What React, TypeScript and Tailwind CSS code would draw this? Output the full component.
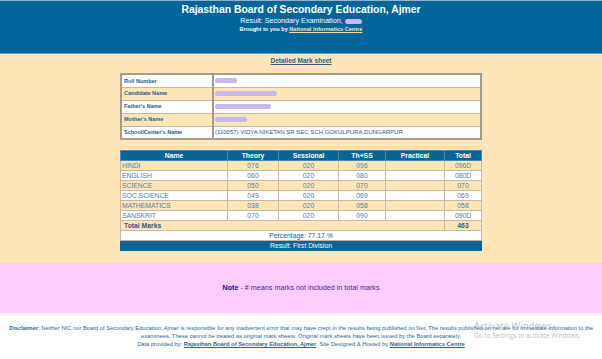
const font = { fontFamily: '"Liberation Sans Narrow", "Liberation Sans", Arial, sans-serif' }

function Blur({ w }: { w: number }) {
  return (
    <span
      className="inline-block h-[5px] rounded-full bg-[#c8b6ee] align-middle blur-[0.6px]"
      style={{ width: w }}
    />
  )
}

const info = [
  { label: 'Roll Number', blur: 22 },
  { label: 'Candidate Name', blur: 62 },
  { label: "Father's Name", blur: 56 },
  { label: "Mother's Name", blur: 32 },
  { label: "School/Center's Name", text: '(110057) VIDYA NIKETAN SR SEC SCH,GOKULPURA,DUNGARPUR' },
]

const marks = [
  ['HINDI', '076', '020', '096', '', '096D'],
  ['ENGLISH', '060', '020', '080', '', '080D'],
  ['SCIENCE', '050', '020', '070', '', '070'],
  ['SOC.SCIENCE', '049', '020', '069', '', '069'],
  ['MATHEMATICS', '038', '020', '058', '', '058'],
  ['SANSKRIT', '070', '020', '090', '', '090D'],
]

export default function App() {
  return (
    <div className="relative h-[359px] w-[602px] overflow-hidden bg-white" style={font}>
      {/* header */}
      <div className="h-[54px] border-t border-[#8fb5cc] border-b border-b-[#5a9fc4] bg-[#006699] pt-[2px] text-center text-white">
        <div className="text-[10.4px] font-bold leading-[13px]">Rajasthan Board of Secondary Education, Ajmer</div>
        <div className="text-[7.2px] leading-[9px]">
          Result: Secondary Examination, <Blur w={17} />
        </div>
        <div className="text-[5.6px] font-bold leading-[9px]">
          Brought to you by <span className="text-[#ffe4b5] underline">National Informatics Centre</span>
        </div>
      </div>

      {/* mark sheet */}
      <div className="h-[209px] bg-[#ffe6b9] pt-[1px]">
        <div className="text-center text-[6.5px] font-bold leading-[12px] text-[#2a5f8f] underline">Detailed Mark sheet</div>

        <table className="mx-auto mt-[6px] w-[362px] border-collapse border-2 border-[#a59a89] text-[5.5px] text-[#1d5a92]">
          <tbody>
            {info.map((r, i) => (
              <tr key={r.label} className={`h-[13px] border-b border-[#c4b8a4] ${i % 2 ? 'bg-[#ffe6b9]' : 'bg-white'}`}>
                <td className="w-[92px] border-r-2 border-[#a59a89] pl-[2px] font-bold">{r.label}</td>
                <td className="pl-[1px] text-[6px]">{r.text ?? <Blur w={r.blur!} />}</td>
              </tr>
            ))}
          </tbody>
        </table>

        <table className="mx-auto mt-[10px] w-[362px] border-collapse border border-[#c9b99c] text-[6.8px] leading-[8px] text-[#4b7bab]">
          <thead>
            <tr className="h-[10px] bg-[#006699] text-white">
              <th className="w-[107px] border border-[#4a88ad] font-bold">Name</th>
              <th className="w-[51px] border border-[#4a88ad] font-bold">Theory</th>
              <th className="w-[60px] border border-[#4a88ad] font-bold">Sessional</th>
              <th className="w-[47px] border border-[#4a88ad] font-bold">Th+SS</th>
              <th className="w-[59px] border border-[#4a88ad] font-bold">Practical</th>
              <th className="border border-[#4a88ad] font-bold">Total</th>
            </tr>
          </thead>
          <tbody>
            {marks.map((m, i) => (
              <tr key={m[0]} className={`h-[10px] ${i % 2 ? 'bg-white' : 'bg-[#ffe6b9]'}`}>
                {m.map((c, j) => (
                  <td key={j} className={`border border-[#c4b8a4] ${j === 0 ? 'pl-[1px] text-left' : 'text-center'}`}>
                    {c}
                  </td>
                ))}
              </tr>
            ))}
            <tr className="h-[10px] bg-[#ffe6b9] font-bold text-[#1d5a92]">
              <td colSpan={5} className="border border-[#c4b8a4] pl-[3px]">Total Marks</td>
              <td className="border border-[#c4b8a4] text-center">463</td>
            </tr>
            <tr className="h-[10px] bg-white text-[#1d5a92]">
              <td colSpan={6} className="border border-[#c4b8a4] text-center">Percentage: 77.17 %</td>
            </tr>
            <tr className="h-[10px] bg-[#006699] text-white">
              <td colSpan={6} className="border border-[#006699] text-center">Result: First Division</td>
            </tr>
          </tbody>
        </table>
      </div>

      {/* note */}
      <div className="flex h-[50px] items-center justify-center bg-[#ffccff] text-[7.2px] text-[#3d2a8c]">
        <span>
          <b className="text-[#10107a]">Note</b> - # means marks not included in total marks
        </span>
      </div>

      {/* disclaimer */}
      <div className="mt-[11px] px-[2px] text-center text-[5.75px] leading-[8px] text-[#2e6495]">
        <b>Disclaimer</b>: Neither NIC nor Board of Secondary Education, Ajmer is responsible for any inadvertent error that may have crept in the results being published on Net. The results published on net are for immediate information to the examinees. These cannot be treated as original mark sheets. Original mark sheets have been issued by the Board separately.
        <br />
        Data provided by: <b className="underline">Rajasthan Board of Secondary Education, Ajmer</b>. Site Designed &amp; Hosted by <b className="underline">National Informatics Centre</b>
      </div>

      {/* windows activation watermark */}
      <div className="pointer-events-none absolute left-[474px] top-[320px] text-[#9a9a9a]/70" style={{ fontFamily: '"Open Sans", sans-serif' }}>
        <div className="text-[9.5px] leading-[11px]">Activate Windows</div>
        <div className="text-[6.5px] leading-[9px]">Go to Settings to activate Windows.</div>
      </div>
    </div>
  )
}
